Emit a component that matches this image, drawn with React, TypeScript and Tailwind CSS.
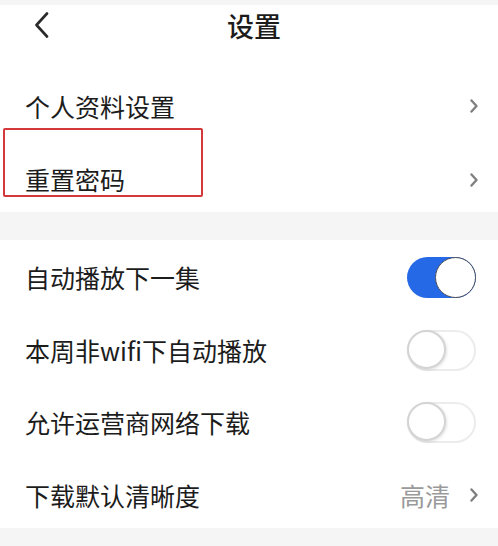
import React from 'react';

const font = { fontFamily: '"Noto Sans CJK SC", "Noto Sans", sans-serif' };

const Chevron = () => (
  <svg width="8" height="14" viewBox="0 0 8 14" fill="none">
    <path d="M1.5 1.5 L6.5 7 L1.5 12.5" stroke="#808080" strokeWidth="2.4" strokeLinecap="round" strokeLinejoin="round" />
  </svg>
);

const Toggle = ({ on }: { on: boolean }) =>
  on ? (
    <div className="w-[69px] h-[41px] rounded-full bg-[#2669e6] flex justify-end">
      <div className="w-[41px] h-[41px] rounded-full bg-white border-[1.5px] border-[#4a4f5c]" />
    </div>
  ) : (
    <div className="w-[69px] h-[41px] rounded-full bg-white border-2 border-[#ececec] flex justify-start">
      <div className="w-[39px] h-[39px] -m-[2px] rounded-full bg-white border-2 border-[#d4d4d4] shadow-[1px_1px_3px_rgba(0,0,0,0.12)]" />
    </div>
  );

const App = () => {
  return (
    <div className="w-[498px] h-[546px] bg-white overflow-hidden text-[#1c1c1c]" style={font}>
      <div className="h-[5px] bg-[#f5f5f5]" />

      {/* header */}
      <div className="h-[40px] grid grid-cols-[1fr_auto_1fr] items-center">
        <div className="pl-[34px] flex items-center">
          <svg width="16" height="26" viewBox="0 0 16 26" fill="none">
            <path d="M13 1.5 L2.5 13 L13 24.5" stroke="#2a2a2a" strokeWidth="2.6" strokeLinecap="round" strokeLinejoin="round" />
          </svg>
        </div>
        <div className="pl-[10px] text-[27px] leading-none font-medium">设置</div>
        <div />
      </div>

      {/* account rows */}
      <div className="relative mt-[25px]">
        <div className="h-[72px] flex items-center justify-between pl-[25px] pr-[20px]">
          <span className="text-[25px] leading-none">个人资料设置</span>
          <Chevron />
        </div>
        <div className="h-[70px] flex items-center justify-between pl-[25px] pr-[20px] pt-[5px]">
          <span className="text-[25px] leading-none">重置密码</span>
          <Chevron />
        </div>
        <div className="absolute left-[3px] top-[58px] w-[200px] h-[69px] border-2 border-[#d4383b] rounded-[2px]" />
      </div>

      <div className="h-[28px] bg-[#f5f5f5]" />

      {/* playback rows */}
      <div className="h-[74px] flex items-center justify-between pl-[25px] pr-[22px]">
        <span className="text-[25px] leading-none">自动播放下一集</span>
        <Toggle on />
      </div>
      <div className="h-[72px] flex items-center justify-between pl-[25px] pr-[22px]">
        <span className="text-[25px] leading-none">本周非wifi下自动播放</span>
        <Toggle on={false} />
      </div>
      <div className="h-[72px] flex items-center justify-between pl-[25px] pr-[22px]">
        <span className="text-[25px] leading-none">允许运营商网络下载</span>
        <Toggle on={false} />
      </div>
      <div className="h-[70px] flex items-center justify-between pl-[25px] pr-[20px] pt-[4px]">
        <span className="text-[25px] leading-none">下载默认清晰度</span>
        <div className="flex items-center gap-[20px]">
          <span className="text-[25px] leading-none text-[#9a9a9a]">高清</span>
          <Chevron />
        </div>
      </div>

      <div className="h-[18px] bg-[#f5f5f5]" />
    </div>
  );
};

export default App;
